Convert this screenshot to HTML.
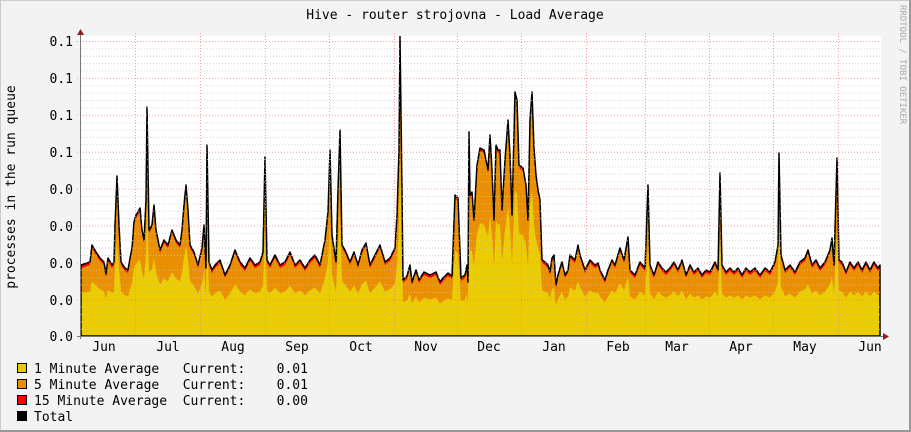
<!DOCTYPE html>
<html><head><meta charset="utf-8"><style>
html,body{margin:0;padding:0;background:#f3f3f3}
svg{display:block}
text{font-family:"DejaVu Sans Mono","Liberation Mono",monospace;font-size:13px;fill:#000}
</style></head><body>
<svg width="911" height="432" xmlns="http://www.w3.org/2000/svg">
<rect x="0" y="0" width="911" height="432" fill="#f3f3f3"/>
<rect x="0.5" y="0.5" width="910" height="431" fill="none" stroke="#cccccc"/>
<line x1="0" y1="431" x2="911" y2="431" stroke="#999" stroke-width="2"/>
<line x1="910" y1="0" x2="910" y2="432" stroke="#999" stroke-width="2"/>
<text x="455" y="19" text-anchor="middle">Hive - router strojovna - Load Average</text>
<text x="0" y="0" transform="translate(15,187) rotate(-90)" text-anchor="middle">processes in the run queue</text>
<text x="0" y="0" transform="translate(900,5) rotate(90)" style="font-size:9px;fill:#aaa">RRDTOOL / TOBI OETIKER</text>
<rect x="81" y="36" width="800" height="300" fill="#ffffff"/>
<defs>
<clipPath id="c"><rect x="81" y="36" width="800" height="300"/></clipPath>
<polygon id="d" points="81,265 90,262 92,245 96,252 100,258 104,262 106,274 108,258 112,265 114,262 115,225 117,176 119,225 121,262 125,268 128,270 130,258 132,248 134,222 136,215 138,212 140,208 142,230 144,240 146,200 147,107 149,230 152,225 154,205 156,230 160,250 164,240 168,245 172,230 176,240 180,245 182,230 184,205 186,185 188,210 190,245 194,252 198,265 202,248 204,225 206,268 207,145 209,262 212,270 215,265 220,260 225,275 230,265 235,250 240,262 245,268 250,258 255,265 260,262 263,252 265,157 267,260 270,265 275,255 280,265 285,262 290,252 295,265 300,260 305,268 310,260 315,255 320,265 325,240 328,212 330,150 332,235 336,262 338,190 340,130 342,245 345,250 350,262 354,252 358,265 362,250 366,243 370,265 375,255 380,245 385,262 390,258 395,248 397,215 399,150 400,36 402,190 403,280 407,276 410,265 412,282 416,270 419,280 424,272 430,275 436,272 440,282 443,278 448,273 452,276 455,195 458,198 461,278 465,275 467,265 468,282 469,132 470,195 472,192 474,220 477,165 480,148 484,150 486,160 488,170 490,135 492,170 494,220 496,145 498,150 500,150 502,210 505,160 508,120 510,155 512,215 515,92 517,100 519,165 523,168 526,185 528,220 530,120 532,92 534,148 536,175 538,190 540,200 542,260 545,262 548,265 550,272 552,258 554,255 556,285 558,275 560,268 562,262 565,275 568,270 570,255 575,260 578,245 580,255 585,270 590,260 595,265 598,263 600,270 605,280 608,270 612,260 615,265 620,248 624,260 628,237 630,270 635,275 640,262 645,268 648,185 650,265 654,275 658,262 662,268 666,272 670,268 674,262 678,270 682,260 686,275 690,265 694,272 698,268 702,275 706,270 710,272 715,262 718,270 720,173 722,265 726,272 730,268 734,272 738,268 742,275 746,268 750,272 755,268 760,275 765,268 770,272 775,262 778,245 779,153 781,255 785,270 790,265 795,272 800,262 805,258 808,250 812,265 816,260 820,268 825,262 830,250 832,238 834,265 837,158 839,260 842,262 846,272 850,262 854,268 858,262 862,270 866,262 870,270 874,262 878,268 880,265 880,336 81,336"/>
</defs>
<g clip-path="url(#c)">
<use href="#d" fill="#ff0000"/>
<use href="#d" fill="#ea8f00" transform="translate(0,3)"/>
<use href="#d" fill="#eacc00" transform="translate(0,336) scale(1,0.6) translate(0,-336)"/>
<use href="#d" fill="none" stroke="#000" stroke-width="1.5" stroke-linejoin="round"/>
</g>
<g stroke-dasharray="1,2" stroke-width="1" opacity="0.75">
<g stroke="#c8c8c8">
<line x1="81" x2="881" y1="48.9" y2="48.9"/><line x1="81" x2="881" y1="56.3" y2="56.3"/><line x1="81" x2="881" y1="63.6" y2="63.6"/><line x1="81" x2="881" y1="71" y2="71"/>
<line x1="81" x2="881" y1="85.8" y2="85.8"/><line x1="81" x2="881" y1="93.2" y2="93.2"/><line x1="81" x2="881" y1="100.5" y2="100.5"/><line x1="81" x2="881" y1="107.9" y2="107.9"/>
<line x1="81" x2="881" y1="122.7" y2="122.7"/><line x1="81" x2="881" y1="130.1" y2="130.1"/><line x1="81" x2="881" y1="137.4" y2="137.4"/><line x1="81" x2="881" y1="144.8" y2="144.8"/>
<line x1="81" x2="881" y1="159.6" y2="159.6"/><line x1="81" x2="881" y1="167" y2="167"/><line x1="81" x2="881" y1="174.3" y2="174.3"/><line x1="81" x2="881" y1="181.7" y2="181.7"/>
<line x1="81" x2="881" y1="196.5" y2="196.5"/><line x1="81" x2="881" y1="203.9" y2="203.9"/><line x1="81" x2="881" y1="211.2" y2="211.2"/><line x1="81" x2="881" y1="218.6" y2="218.6"/>
<line x1="81" x2="881" y1="233.4" y2="233.4"/><line x1="81" x2="881" y1="240.8" y2="240.8"/><line x1="81" x2="881" y1="248.1" y2="248.1"/><line x1="81" x2="881" y1="255.5" y2="255.5"/>
<line x1="81" x2="881" y1="270.3" y2="270.3"/><line x1="81" x2="881" y1="277.7" y2="277.7"/><line x1="81" x2="881" y1="285" y2="285"/><line x1="81" x2="881" y1="292.4" y2="292.4"/>
<line x1="81" x2="881" y1="307.2" y2="307.2"/><line x1="81" x2="881" y1="314.6" y2="314.6"/><line x1="81" x2="881" y1="321.9" y2="321.9"/><line x1="81" x2="881" y1="329.3" y2="329.3"/>
</g>
<g stroke="#f08080">
<line x1="77" x2="881" y1="41.5" y2="41.5"/><line x1="77" x2="881" y1="78.4" y2="78.4"/><line x1="77" x2="881" y1="115.3" y2="115.3"/><line x1="77" x2="881" y1="152.2" y2="152.2"/><line x1="77" x2="881" y1="189.1" y2="189.1"/><line x1="77" x2="881" y1="226" y2="226"/><line x1="77" x2="881" y1="262.9" y2="262.9"/><line x1="77" x2="881" y1="299.8" y2="299.8"/>
<line y1="33" y2="339" x1="135.5" x2="135.5"/><line y1="33" y2="339" x1="200.5" x2="200.5"/><line y1="33" y2="339" x1="265.5" x2="265.5"/><line y1="33" y2="339" x1="329.5" x2="329.5"/><line y1="33" y2="339" x1="394.5" x2="394.5"/><line y1="33" y2="339" x1="457.5" x2="457.5"/><line y1="33" y2="339" x1="521.5" x2="521.5"/><line y1="33" y2="339" x1="586.5" x2="586.5"/><line y1="33" y2="339" x1="645.5" x2="645.5"/><line y1="33" y2="339" x1="709.5" x2="709.5"/><line y1="33" y2="339" x1="773.5" x2="773.5"/><line y1="33" y2="339" x1="838.5" x2="838.5"/>
</g>
</g>
<line x1="80.5" y1="34" x2="80.5" y2="339" stroke="#777"/>
<line x1="77" y1="336.5" x2="884" y2="336.5" stroke="#777"/>
<polygon points="77,35 84,35 80.5,29" fill="#902020"/>
<polygon points="883,333 883,340 889,336.5" fill="#902020"/>
<g text-anchor="end">
<text x="73" y="46">0.1</text><text x="73" y="83">0.1</text><text x="73" y="120">0.1</text><text x="73" y="157">0.1</text><text x="73" y="194">0.0</text><text x="73" y="231">0.0</text><text x="73" y="268">0.0</text><text x="73" y="305">0.0</text><text x="73" y="341">0.0</text>
</g>
<g text-anchor="middle">
<text x="104" y="351">Jun</text><text x="168" y="351">Jul</text><text x="233" y="351">Aug</text><text x="297" y="351">Sep</text><text x="361" y="351">Oct</text><text x="426" y="351">Nov</text><text x="489" y="351">Dec</text><text x="554" y="351">Jan</text><text x="618" y="351">Feb</text><text x="677" y="351">Mar</text><text x="741" y="351">Apr</text><text x="805" y="351">May</text><text x="870" y="351">Jun</text>
</g>
<rect x="17.5" y="363.5" width="9" height="9" fill="#eacc00" stroke="#000"/>
<rect x="17.5" y="379.5" width="9" height="9" fill="#ea8f00" stroke="#000"/>
<rect x="17.5" y="395.5" width="9" height="9" fill="#ff0000" stroke="#000"/>
<rect x="17.5" y="411.5" width="9" height="9" fill="#000" stroke="#000"/>
<text x="34" y="373" xml:space="preserve">1 Minute Average   Current:    0.01</text>
<text x="34" y="389" xml:space="preserve">5 Minute Average   Current:    0.01</text>
<text x="34" y="405" xml:space="preserve">15 Minute Average  Current:    0.00</text>
<text x="34" y="421">Total</text>
</svg>
</body></html>
